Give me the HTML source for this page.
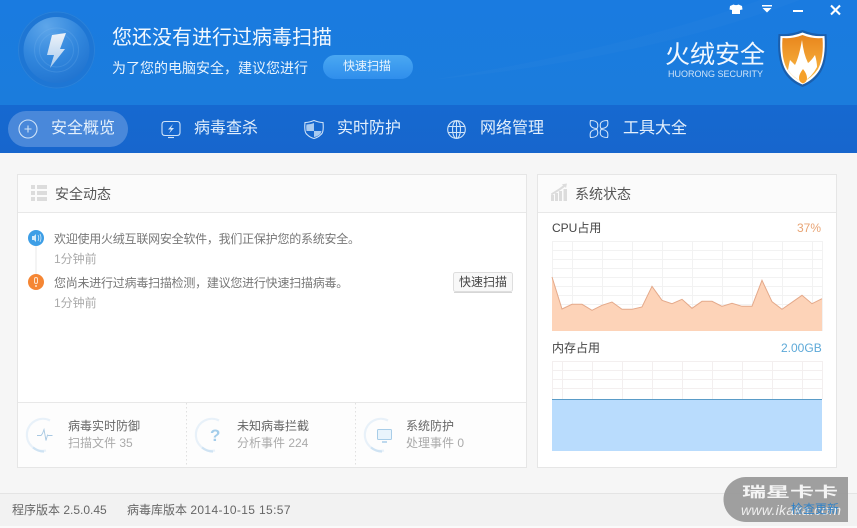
<!DOCTYPE html>
<html><head><meta charset="utf-8">
<style>
html,body{margin:0;padding:0}
body{width:857px;height:528px;position:relative;overflow:hidden;background:#f6f6f6;font-family:"Liberation Sans","Noto Sans CJK SC",sans-serif;}
.t{position:absolute;white-space:nowrap;line-height:1;}
.n{color:#e4f0fc;font-size:16px;top:121px}
svg{position:absolute;left:0;top:0}
</style></head><body>
<svg width="857" height="528" viewBox="0 0 857 528">
<defs>
<linearGradient id="hd" x1="0" y1="0" x2="0" y2="1"><stop offset="0" stop-color="#1a7be0"/><stop offset="1" stop-color="#1b7cdc"/></linearGradient>
<linearGradient id="nv" x1="0" y1="0" x2="0" y2="1"><stop offset="0" stop-color="#1669d0"/><stop offset="1" stop-color="#1766cd"/></linearGradient>
<radialGradient id="ball" cx=".35" cy=".15" r="1"><stop offset="0" stop-color="#5ea6ea"/><stop offset=".5" stop-color="#3287dd"/><stop offset="1" stop-color="#1c6fcd"/></radialGradient>
<linearGradient id="btn" x1="0" y1="0" x2="0" y2="1"><stop offset="0" stop-color="#4aa8f2"/><stop offset="1" stop-color="#2f8eec"/></linearGradient>
<linearGradient id="sh" x1="0" y1="0" x2="0" y2="1"><stop offset="0" stop-color="#e8851c"/><stop offset="1" stop-color="#fbbd48"/></linearGradient>
<linearGradient id="bolt" x1="0" y1="0" x2="0" y2="1"><stop offset="0" stop-color="#eef3f9"/><stop offset="1" stop-color="#a8cbee"/></linearGradient>
</defs>
<rect width="857" height="105" fill="url(#hd)"/>
<path d="M430 80Q620 50 760 0L800 0Q640 60 430 80Z" fill="#fff" opacity=".02"/>
<rect y="105" width="857" height="48" fill="url(#nv)"/>
<!-- logo ball -->
<circle cx="56.500" cy="50" r="38.500" fill="#1e76d4"/>
<circle cx="56.500" cy="50" r="38" fill="none" stroke="#2a82da" stroke-width="1"/>
<circle cx="56.500" cy="50" r="33" fill="url(#ball)"/>
<circle cx="56.500" cy="50" r="22" fill="none" stroke="#7fbbf0" stroke-opacity=".22"/>
<circle cx="56.500" cy="50" r="17" fill="none" stroke="#7fbbf0" stroke-opacity=".22"/>
<path d="M52 35L66 33L60 49L65 49L50 68L54 55L47 55Z" fill="url(#bolt)"/>
<!-- scan button -->
<rect x="323" y="55" width="90" height="24" rx="12" fill="url(#btn)"/>
<!-- active nav -->
<rect x="8" y="111" width="120" height="36" rx="18" fill="#5b93dd" opacity=".75"/>
<g fill="none" stroke="#cfe3f8" stroke-width="1.1">
<circle cx="28" cy="129" r="9"/><path d="M28 125.500v7M24.500 129h7"/>
<path d="M165 121.500h12q3 0 3 3v8q0 3-3 3h-12q-3 0-3-3v-8q0-3 3-3Z"/><path d="M168 137.500h6"/>
<path d="M173 124l-5 5.500h3l-2 4 5-5.500h-3z" fill="#cfe3f8" stroke="none"/>
<path d="M314 120.500q5 2 9 2q1 10-2 12q-3 3-7 4q-4-1-7-4q-3-2-2-12q4 0 9-2Z"/>
<path d="M314 123v8h-7.500q-.5-4 0-6.500q4 0 7.500-1.500ZM314 131h7.500q-1 5-7.500 6Z" fill="#a9cbf0" stroke="none"/>
<circle cx="456.500" cy="129.500" r="8.800"/><ellipse cx="456.500" cy="129.500" rx="4" ry="8.800"/><path d="M448 126.500h17M448 132.500h17M456.500 120.700v18"/>
<path d="M590.500 120.500q6 0 7 3q.7 3-.5 5q-5 0-6.500-3q-.7-2.500 0-5ZM607.500 120.500q-6 0-7 3q-.7 3 .5 5q5 0 6.500-3q.7-2.500 0-5ZM590.500 137.500q6 0 7-3q.7-3-.5-5q-5 0-6.500 3q-.7 2.500 0 5ZM607.500 137.500q-6 0-7-3q-.7-3 .5-5q5 0 6.500 3q.7 2.500 0 5Z"/>
</g>
<!-- window buttons -->
<path d="M733.500 4.500q2.500 1.200 5 0l3.500 1.500l.5 3.500l-2.500.5v4h-8v-4l-2.500-.5l.5-3.500Z" fill="#fff"/>
<path d="M762 5h10v1.500h-10ZM762.500 8h9l-4.500 4.500Z" fill="#fff"/>
<rect x="793" y="10" width="10" height="2" fill="#fff"/>
<path d="M831 5.500l9 9M840 5.500l-9 9" stroke="#fff" stroke-width="2.100" fill="none"/>
<!-- shield -->
<path d="M802.500 30q12 5 24 4q2 24-5 37q-6 11-19 16q-13-5-19-16q-7-13-5-37q12 1 24-4Z" fill="#1a5fae"/>
<path d="M802.500 32.500q11 4.500 22 3.500q1.500 22-5 34q-6 10-17 14.500q-11-4.500-17-14.500q-6.500-12-5-34q11 1 22-3.500Z" fill="#fff"/>
<path d="M802.500 35q10 4 20 3q1.500 20-4.500 31q-6 9-15.500 13q-9.500-4-15.500-13q-6-11-4.500-31q10 1 20-3Z" fill="url(#sh)"/>
<path d="M802 40q1.500 14 6 23q3-2 7-8q2 7 2 12q-5 10-14.500 15q-10-5-14.500-12q1-6 2-10q2 2 5 5q4-8 7-25Z" fill="#fff"/>
<path d="M803 69q4 5 4 9q0 4-4 5.500q-4-1.500-4-5.500q0-4 4-9Z" fill="#f5a02a"/>
<!-- left panel -->
<rect x="17.500" y="174.500" width="509" height="293" fill="#fff" stroke="#e6e6e6"/>
<rect x="18" y="175" width="508" height="37" fill="#fbfbfb"/>
<path d="M18 212.500h508" stroke="#e8e8e8"/>
<rect x="18" y="403" width="508" height="64" fill="#fdfdfd"/>
<path d="M18 402.500h508" stroke="#e8e8e8"/>
<path d="M186.500 403v64M355.500 403v64" stroke="#e0e0e0" stroke-dasharray="1.500 2.500"/>
<g fill="#dcdcdc">
<rect x="31" y="185" width="4" height="4"/><rect x="37" y="185" width="10" height="4"/>
<rect x="31" y="191" width="4" height="4"/><rect x="37" y="191" width="10" height="4"/>
<rect x="31" y="197" width="4" height="4"/><rect x="37" y="197" width="10" height="4"/>
</g>
<!-- timeline -->
<path d="M36 245v30" stroke="#e8e8e8"/>
<circle cx="36" cy="238" r="8" fill="#3d9ee6"/>
<path d="M32 236h2l2-2v8l-2-2h-2Z" fill="#d4ebfa"/><path d="M38 235q1.500 3 0 6M40 234q2 4 0 8" stroke="#d4ebfa" fill="none" stroke-width=".8"/>
<circle cx="36" cy="282" r="8" fill="#f58634"/>
<rect x="34.500" y="277.500" width="3" height="6" rx="1.500" fill="none" stroke="#fde3cc"/><circle cx="36" cy="286" r="1" fill="#fde3cc"/>
<!-- quick button -->
<rect x="453.500" y="272.500" width="59" height="19" rx="2" fill="#f8f8f8" stroke="#dedede"/>
<path d="M454 292.500h58" stroke="#d6d6d6"/>
<!-- stats rings -->
<g fill="none" stroke-width="2.200" stroke="#e8f1f9">
<path d="M50 420.500a16 16 0 1 0 -4 30"/>
<path d="M219 420.500a16 16 0 1 0 -4 30"/>
<path d="M388 420.500a16 16 0 1 0 -4 30"/>
</g>
<path d="M33 447.500q5 4 11 4M202 447.500q5 4 11 4M371 447.500q5 4 11 4" fill="none" stroke="#cfe3f3" stroke-width="2.200"/>
<path d="M37 435.500h4l1.500-2 1.500-4 2 11 1.500-5.500 1 .5h4" fill="none" stroke="#a8c8e2" stroke-width=".9"/>
<rect x="377.500" y="429.500" width="14" height="10" rx="1" fill="#e9f4fc" stroke="#a8cde8"/><path d="M382 442h5" stroke="#a8cde8" stroke-width="1.500"/>
<!-- right panel -->
<rect x="537.500" y="174.500" width="299" height="293" fill="#fff" stroke="#e6e6e6"/>
<rect x="538" y="175" width="298" height="37" fill="#fbfbfb"/>
<path d="M538 212.500h298" stroke="#e8e8e8"/>
<g fill="#dcdcdc">
<rect x="551" y="195" width="3" height="6"/><rect x="555" y="193" width="3" height="8"/><rect x="559" y="191" width="3" height="10"/><rect x="563.500" y="189" width="3.500" height="12"/>
<path d="M551 193.500l8-5 4-3-1-1.200 5-.8-1 4.500-1-1.300-4.500 3.300-9 5.500Z"/>
</g>
<!-- CPU chart -->
<g stroke="#f2f2f2" fill="none">
<path d="M552 241.500h270M552 250.500h270M552 259.500h270M552 268.500h270M552 277.500h270M552 286.500h270M552 295.500h270M552 304.500h270M552 313.500h270M552 322.500h270"/>
<path d="M552.500 241v90M572.500 241v90M602.500 241v90M632.500 241v90M662.500 241v90M692.500 241v90M722.500 241v90M752.500 241v90M782.500 241v90M812.500 241v90M822.500 241v90"/>
</g>
<path d="M552 331V277L562 309L572 304.300L582 304.300L592 310.300L602 305.300L612 302L622 309.300L632 309.300L642 307L652 286.300L662 300.300L672 303.700L682 299.300L692 308.300L702 301.300L712 301.300L722 306.300L732 303.300L742 306.300L752 306.300L762 280.300L772 301.700L782 309.300L792 302.300L802 295.300L812 303.700L822 298.700V331Z" fill="#fdd3b8"/>
<path d="M552 277L562 309L572 304.300L582 304.300L592 310.300L602 305.300L612 302L622 309.300L632 309.300L642 307L652 286.300L662 300.300L672 303.700L682 299.300L692 308.300L702 301.300L712 301.300L722 306.300L732 303.300L742 306.300L752 306.300L762 280.300L772 301.700L782 309.300L792 302.300L802 295.300L812 303.700L822 298.700" fill="none" stroke="#e4a98a"/>
<!-- mem chart -->
<g stroke="#f3efef" fill="none">
<path d="M552 361.500h270M552 370.500h270M552 379.500h270M552 388.500h270"/>
<path d="M552.500 361v38M562.500 361v38M592.500 361v38M622.500 361v38M652.500 361v38M682.500 361v38M712.500 361v38M742.500 361v38M772.500 361v38M802.500 361v38M822.500 361v38"/>
</g>
<rect x="552" y="399" width="270" height="52" fill="#b9dcfd"/>
<path d="M552 399.500h270" stroke="#5a9cc8"/>
<!-- footer -->
<rect y="493" width="857" height="33" fill="#f2f2f2"/>
<path d="M0 493.500h857" stroke="#e4e4e4"/>
<rect y="526" width="857" height="2" fill="#fafafa"/>
<!-- watermark -->
<path d="M746 477H848V522H746a22.500 22.500 0 0 1 0-45Z" fill="#9a9a9a" opacity=".95"/>
</svg>

<div class="t" style="left:112px;top:28px;font-size:20px;color:#f2f8fe">您还没有进行过病毒扫描</div>
<div class="t" style="left:112px;top:61px;font-size:14px;color:#e8f3fd">为了您的电脑安全，建议您进行</div>
<div class="t" style="left:343px;top:60px;font-size:12px;color:#e8f4fe">快速扫描</div>
<div class="t" style="left:665px;top:43px;font-size:25px;color:#f0f7fe">火绒安全</div>
<div class="t" style="left:668px;top:70px;font-size:9px;color:#cfe4f8">HUORONG SECURITY</div>
<div class="t n" style="left:51px">安全概览</div>
<div class="t n" style="left:194px">病毒查杀</div>
<div class="t n" style="left:337px">实时防护</div>
<div class="t n" style="left:480px">网络管理</div>
<div class="t n" style="left:623px">工具大全</div>

<div class="t" style="left:55px;top:187px;font-size:14px;color:#555">安全动态</div>
<div class="t" style="left:54px;top:233px;font-size:12px;color:#777;letter-spacing:-.24px">欢迎使用火绒互联网安全软件，我们正保护您的系统安全。</div>
<div class="t" style="left:54px;top:253px;font-size:12px;color:#aaa">1分钟前</div>
<div class="t" style="left:54px;top:277px;font-size:12px;color:#777;letter-spacing:-.24px">您尚未进行过病毒扫描检测，建议您进行快速扫描病毒。</div>
<div class="t" style="left:54px;top:297px;font-size:12px;color:#aaa">1分钟前</div>
<div class="t" style="left:459px;top:276px;font-size:12px;color:#444">快速扫描</div>

<div class="t" style="left:68px;top:420px;font-size:12px;color:#666">病毒实时防御</div>
<div class="t" style="left:68px;top:437px;font-size:12px;color:#aaa">扫描文件 35</div>
<div class="t" style="left:237px;top:420px;font-size:12px;color:#666">未知病毒拦截</div>
<div class="t" style="left:237px;top:437px;font-size:12px;color:#aaa">分析事件 224</div>
<div class="t" style="left:406px;top:420px;font-size:12px;color:#666">系统防护</div>
<div class="t" style="left:406px;top:437px;font-size:12px;color:#aaa">处理事件 0</div>
<div class="t" style="left:210px;top:427px;font-size:17px;font-weight:bold;color:#a4cdea">?</div>

<div class="t" style="left:575px;top:187px;font-size:14px;color:#555">系统状态</div>
<div class="t" style="left:552px;top:222px;font-size:12px;color:#444">CPU占用</div>
<div class="t" style="left:797px;top:222px;font-size:12px;color:#e8a474">37%</div>
<div class="t" style="left:552px;top:342px;font-size:12px;color:#444">内存占用</div>
<div class="t" style="left:781px;top:342px;font-size:12px;color:#5da9d8">2.00GB</div>

<div class="t" style="left:12px;top:504px;font-size:12px;color:#666">程序版本 2.5.0.45</div>
<div class="t" style="left:127px;top:504px;font-size:12px;color:#666">病毒库版本 <span style="letter-spacing:.36px">2014-10-15 15:57</span></div>
<div class="t" style="left:742px;top:481px;font-size:24px;font-weight:bold;color:#f4f4f4;transform:scaleY(.6);transform-origin:left center">瑞星卡卡</div>
<div class="t" style="left:741px;top:503px;font-size:14px;font-style:italic;color:#eee;letter-spacing:.3px">www.ikaka.com</div>
<div class="t" style="left:791px;top:503px;font-size:12px;color:#2f82c8">检查更新</div>
</body></html>
